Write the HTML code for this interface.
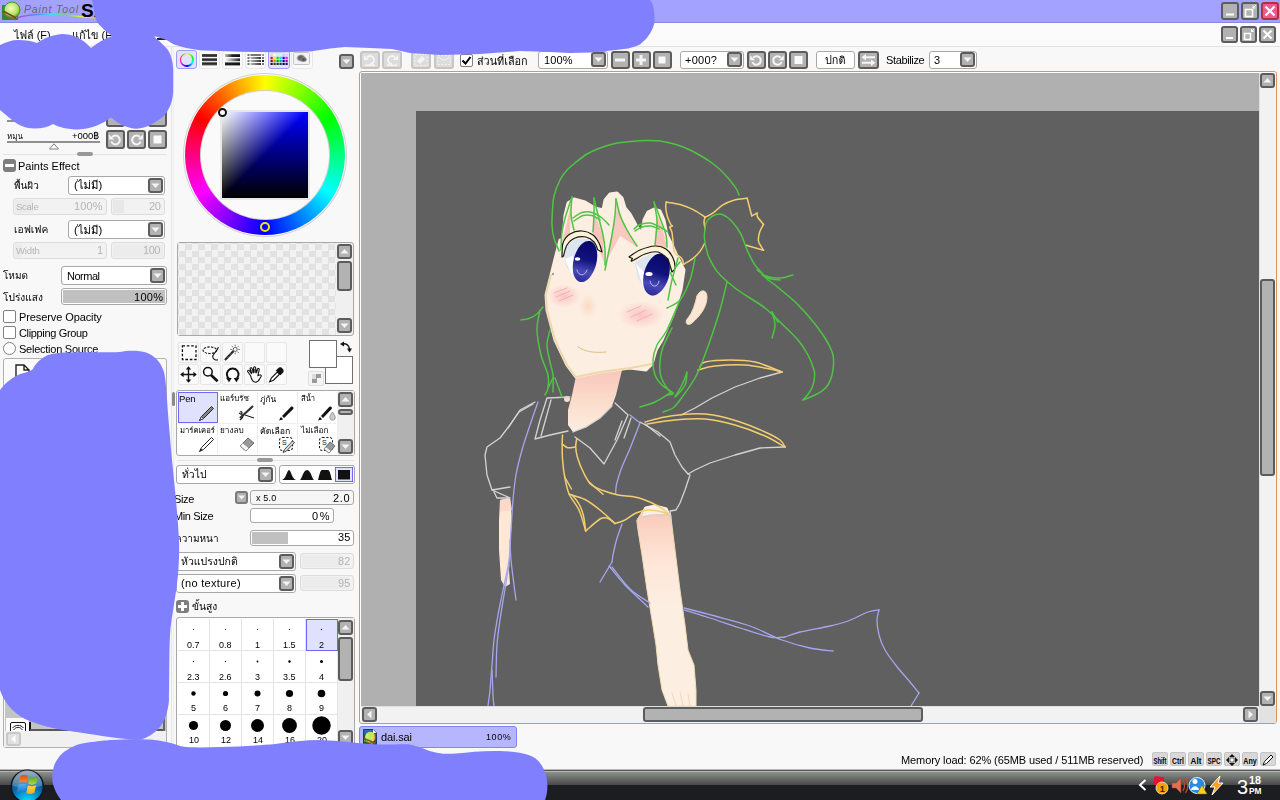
<!DOCTYPE html>
<html lang="th">
<head>
<meta charset="utf-8">
<title>PaintTool SAI</title>
<style>
*{box-sizing:border-box;margin:0;padding:0}
html,body{width:1280px;height:800px;overflow:hidden;background:#f8f8f8}
body{font-family:"Liberation Sans","Loma","Noto Sans Thai","DejaVu Sans",sans-serif;font-size:11px;color:#000;position:relative}
#app{position:absolute;left:0;top:0;width:1280px;height:800px;overflow:hidden;background:#f8f8f8}
.a{position:absolute}
.t{position:absolute;white-space:nowrap;line-height:14px;font-size:11.5px}
.th{position:absolute;white-space:nowrap;line-height:16px;font-size:11.5px}
.b{position:absolute;background:#b2b2b2;border:2px solid #5c5c5c;border-radius:3px}
.bd{position:absolute;background:#dcdcdc;border:2px solid #c6c6c6;border-radius:3px}
.f{position:absolute;background:#fff;border:1px solid #a8a8a8;border-radius:3px}
.fd{position:absolute;background:#f2f2f2;border:1px solid #dcdcdc;border-radius:3px;color:#b8b8b8}
.ic{position:absolute;border:1px solid #e6e6e6;border-radius:2px;background:#fafafa}
svg{position:absolute;overflow:visible}
.r{text-align:right}
.x{position:absolute;white-space:nowrap;line-height:16px;will-change:transform}
.sk{height:14px;background:#d8d8d8;border:1px solid #c4c4c4;border-radius:2px;font-size:9.5px;line-height:13px;white-space:nowrap;overflow:visible;font-weight:bold;font-family:"Liberation Sans","DejaVu Sans",sans-serif}
.sk span{position:absolute;left:-12px;width:38px;top:1px;text-align:center;display:block}
</style>
</head>
<body>
<div id="app">

<!-- ===== title bar ===== -->
<div class="a" id="titlebar" style="left:0;top:0;width:1280px;height:23px;background:#a3a3ff;border-bottom:1px solid #8888e6"></div>
<!-- ===== menu bar ===== -->
<div class="a" id="menubar" style="left:0;top:23px;width:1280px;height:24px;background:#fbfbfb;border-bottom:1px solid #e2e2e2"></div>

<!-- logo -->
<svg class="a" style="left:0;top:0" width="100" height="23" viewBox="0 0 100 23">
  <defs>
    <linearGradient id="rb" x1="0" x2="1" y1="0" y2="0">
      <stop offset="0" stop-color="#c040e0"/><stop offset=".25" stop-color="#6080ff"/><stop offset=".45" stop-color="#40e0f0"/><stop offset=".65" stop-color="#60e060"/><stop offset=".85" stop-color="#f0f040"/><stop offset="1" stop-color="#ffb040"/>
    </linearGradient>
    <radialGradient id="lime" cx=".45" cy=".4" r=".6"><stop offset="0" stop-color="#f0ffc0"/><stop offset=".7" stop-color="#b8e060"/><stop offset="1" stop-color="#50a020"/></radialGradient>
  </defs>
  <rect x="2" y="5" width="16" height="15" rx="1" fill="#2e8a34"/>
  <circle cx="12" cy="10" r="8" fill="url(#lime)" stroke="#3a9a2a" stroke-width="1"/>
  <path d="M3 11 L18 19" stroke="#7a4a20" stroke-width="1.6"/>
  <path d="M3 14 L16 20" stroke="#a06a30" stroke-width="1.2"/>
  <path d="M16 18 C35 12,55 14,95 18" stroke="url(#rb)" stroke-width="1.6" fill="none"/>
  <text x="24" y="13" font-family="Liberation Sans,sans-serif" font-style="italic" font-size="10.5" fill="#666" letter-spacing=".85">Paint Tool</text>
  <text x="81" y="17" font-family="Liberation Sans,sans-serif" font-weight="bold" font-size="19" fill="#000">SAI</text>
</svg>

<!-- window buttons row 1 -->
<div class="b" style="left:1221px;top:2px;width:18px;height:18px"><svg width="14" height="14" viewBox="0 0 14 14"><rect x="3" y="9.5" width="8" height="2" fill="#fff"/></svg></div>
<div class="b" style="left:1241px;top:2px;width:18px;height:18px"><svg width="14" height="14" viewBox="0 0 14 14"><rect x="2.5" y="5.5" width="7" height="7" fill="none" stroke="#fff" stroke-width="1.6"/><path d="M10 4 L13 1 M10 1.5 V4 H12.5" stroke="#fff" stroke-width="1" fill="none"/></svg></div>
<div class="b" style="left:1261px;top:2px;width:18px;height:18px;background:#ee5a8e;border-color:#b0303c"><svg width="14" height="14" viewBox="0 0 14 14"><path d="M2.5 2.5 L11.5 11.5 M11.5 2.5 L2.5 11.5" stroke="#fff" stroke-width="2.2"/></svg></div>
<!-- window buttons row 2 -->
<div class="b" style="left:1221px;top:26px;width:17px;height:17px"><svg width="13" height="13" viewBox="0 0 13 13"><rect x="3" y="9" width="7" height="2" fill="#fff"/></svg></div>
<div class="b" style="left:1240px;top:26px;width:17px;height:17px"><svg width="13" height="13" viewBox="0 0 13 13"><rect x="2.5" y="5.5" width="6" height="6" fill="none" stroke="#fff" stroke-width="1.5"/><path d="M9.5 3.5 L12 1 M9.5 1.2 V3.5 H11.8" stroke="#fff" stroke-width="1" fill="none"/></svg></div>
<div class="b" style="left:1259px;top:26px;width:17px;height:17px"><svg width="13" height="13" viewBox="0 0 13 13"><path d="M2.5 2.5 L10.5 10.5 M10.5 2.5 L2.5 10.5" stroke="#fff" stroke-width="2"/></svg></div>

<!-- menu text -->


<div class="a" style="left:157px;top:38px;width:9px;height:2px;background:#222"></div>

<!-- ===== left panel ===== -->
<div class="a" style="left:171px;top:47px;width:1px;height:700px;background:#e4e4e4"></div>
<div class="a" style="left:173px;top:47px;width:1px;height:700px;background:#eeeeee"></div>
<!-- hidden-by-blob row of buttons (partially visible) -->
<div class="b" style="left:106px;top:108px;width:19px;height:19px"></div>
<div class="b" style="left:127px;top:108px;width:19px;height:19px"></div>
<div class="b" style="left:148px;top:108px;width:19px;height:19px"></div>
<div class="a" style="left:7px;top:120px;width:93px;height:2px;background:#909090"></div>
<!-- rotate row -->


<div class="a" style="left:7px;top:141px;width:93px;height:2px;background:#909090"></div>
<svg style="left:48px;top:143px" width="12" height="7" viewBox="0 0 12 7"><path d="M6 .8 L10.5 6 H1.5 Z" fill="#fff" stroke="#808080" stroke-width="1"/></svg>
<div class="b" style="left:106px;top:130px;width:19px;height:19px"><svg width="15" height="15" viewBox="0 0 15 15"><path d="M4.200 5 A4.400 4.400 0 1 1 3.300 9.500" fill="none" stroke="#f6f6f6" stroke-width="2"/><path d="M1.200 2.500 V7.500 H6.200 Z" fill="#f6f6f6"/></svg></div>
<div class="b" style="left:127px;top:130px;width:19px;height:19px"><svg width="15" height="15" viewBox="0 0 15 15"><path d="M10.800 5 A4.400 4.400 0 1 0 11.700 9.500" fill="none" stroke="#f6f6f6" stroke-width="2"/><path d="M13.800 2.500 V7.500 H8.800 Z" fill="#f6f6f6"/></svg></div>
<div class="b" style="left:148px;top:130px;width:19px;height:19px"><svg width="15" height="15" viewBox="0 0 15 15"><rect x="3.500" y="3.500" width="8" height="8" fill="#fafafa"/></svg></div>
<!-- separator -->
<div class="a" style="left:3px;top:154px;width:164px;height:1px;background:#e4e4e4"></div>
<div class="a" style="left:77px;top:152px;width:16px;height:4px;border-radius:2px;background:#989898"></div>
<!-- Paints Effect -->
<div class="a" style="left:3px;top:159px;width:13px;height:13px;border-radius:3px;background:#7e7e7e"><div class="a" style="left:2px;top:5px;width:9px;height:3px;background:#fff"></div></div>


<div class="f" style="left:68px;top:176px;width:97px;height:19px"></div>
<div class="b" style="left:148px;top:178px;width:15px;height:15px"><svg width="11" height="11" viewBox="0 0 11 11"><path d="M1.5 3.5 H9.5 L5.5 8 Z" fill="#f4f4f4"/></svg></div>
<div class="fd" style="left:13px;top:198px;width:94px;height:17px"><div class="a" style="left:1px;top:1px;width:18px;height:13px;background:#ebebeb"></div></div>
<div class="fd" style="left:111px;top:198px;width:54px;height:17px"><div class="a" style="left:1px;top:1px;width:11px;height:13px;background:#e8e8e8"></div></div>

<div class="f" style="left:68px;top:220px;width:97px;height:19px"></div>
<div class="b" style="left:148px;top:222px;width:15px;height:15px"><svg width="11" height="11" viewBox="0 0 11 11"><path d="M1.5 3.5 H9.5 L5.5 8 Z" fill="#f4f4f4"/></svg></div>
<div class="fd" style="left:13px;top:242px;width:94px;height:17px"><div class="a" style="left:1px;top:1px;width:7px;height:13px;background:#ebebeb"></div></div>
<div class="fd" style="left:111px;top:242px;width:54px;height:17px"><div class="a" style="left:1px;top:1px;width:50px;height:13px;background:#ececec"></div></div>
<!-- mode -->

<div class="f" style="left:61px;top:266px;width:106px;height:19px"></div>
<div class="b" style="left:150px;top:268px;width:15px;height:15px"><svg width="11" height="11" viewBox="0 0 11 11"><path d="M1.5 3.5 H9.5 L5.5 8 Z" fill="#f4f4f4"/></svg></div>

<div class="f" style="left:61px;top:288px;width:106px;height:17px;background:#fff"><div class="a" style="left:1px;top:1px;width:102px;height:13px;background:#c0c0c0"></div></div>
<!-- checkboxes -->
<div class="a" style="left:3px;top:310px;width:13px;height:13px;border:1px solid #808080;border-radius:2px;background:#fff"></div>

<div class="a" style="left:3px;top:326px;width:13px;height:13px;border:1px solid #808080;border-radius:2px;background:#fff"></div>

<div class="a" style="left:3px;top:342px;width:13px;height:13px;border:1px solid #808080;border-radius:7px;background:#fff"></div>

<!-- layer frame -->
<div class="a" style="left:3px;top:358px;width:164px;height:390px;border:1px solid #b0b0b0;border-radius:3px;background:#fafafa"></div>
<svg style="left:15px;top:364px" width="16" height="18" viewBox="0 0 16 18"><path d="M1 1 H9 L14 6 V17 H1 Z M9 1 V6 H14" fill="#fff" stroke="#222" stroke-width="1.4"/></svg>
<!-- bottom of layer panel -->
<div class="a" style="left:5px;top:700px;width:161px;height:31px;background:#c4c4c4"></div>
<div class="a" style="left:6px;top:718px;width:23px;height:13px;background:#fbfbfb"></div>
<div class="a" style="left:10px;top:722px;width:16px;height:12px;border:1.500px solid #111;border-radius:2px;background:#fdfdfd"></div>
<svg style="left:12px;top:724px" width="12" height="7" viewBox="0 0 12 7"><path d="M.500 4 C3 .500,9 .500,11.500 4 M1.500 6 C4 2.500,8 2.500,10.500 6" fill="none" stroke="#222" stroke-width="1"/></svg>
<div class="a" style="left:29px;top:722px;width:1.500px;height:9px;background:#111"></div>
<div class="a" style="left:30px;top:729px;width:135px;height:1.500px;background:#585858"></div>
<div class="a" style="left:163px;top:711px;width:1.500px;height:20px;background:#686868"></div>
<div class="a" style="left:4px;top:731px;width:162px;height:16px;background:#f0f0f0"></div>
<div class="bd" style="left:6px;top:732px;width:15px;height:14px;background:#e0e0e0;border-color:#c8c8c8"><svg width="11" height="10" viewBox="0 0 11 10"><path d="M7.500 1 V9 L3 5 Z" fill="#fff"/></svg></div>
<!-- ===== color panel ===== -->
<!-- tabs -->
<svg style="left:176px;top:50px" width="140" height="20" viewBox="0 0 140 20">
 <defs>
  <linearGradient id="bv" x1="0" y1="0" x2="0" y2="1"><stop offset="0" stop-color="#111"/><stop offset="1" stop-color="#555"/></linearGradient>
  <linearGradient id="bh1" x1="0" y1="0" x2="1" y2="0"><stop offset="0" stop-color="#bbb"/><stop offset=".5" stop-color="#222"/><stop offset="1" stop-color="#111"/></linearGradient>
  <linearGradient id="bh2" x1="0" y1="0" x2="1" y2="0"><stop offset="0" stop-color="#fff"/><stop offset="1" stop-color="#222"/></linearGradient>
  <linearGradient id="bh3" x1="0" y1="0" x2="1" y2="0"><stop offset="0" stop-color="#222"/><stop offset="1" stop-color="#111"/></linearGradient>
  <linearGradient id="bh4" x1="0" y1="0" x2="1" y2="0"><stop offset="0" stop-color="#bbb"/><stop offset="1" stop-color="#333"/></linearGradient>
  <radialGradient id="smudge"><stop offset="0" stop-color="#444"/><stop offset=".6" stop-color="#777"/><stop offset="1" stop-color="#999" stop-opacity="0"/></radialGradient>
 </defs>
 <rect x=".5" y=".5" width="20" height="18" rx="2.500" fill="#e2e2ff" stroke="#9c9cff"/>
 <rect x="23.500" y=".5" width="20" height="18" rx="2.500" fill="#fafafa" stroke="#e8e8e8"/>
 <rect x="26" y="4.200" width="15" height="2.800" fill="url(#bv)"/><rect x="26" y="8.400" width="15" height="2.800" fill="url(#bv)"/><rect x="26" y="12.400" width="15" height="3" fill="url(#bv)"/>
 <rect x="46.500" y=".5" width="20" height="18" rx="2.500" fill="#fafafa" stroke="#e8e8e8"/>
 <rect x="49" y="4.200" width="15" height="2.800" fill="url(#bh1)"/><rect x="49" y="8.400" width="15" height="2.800" fill="url(#bh2)"/><rect x="49" y="12.400" width="15" height="3" fill="url(#bh3)"/>
 <rect x="69.500" y=".5" width="20" height="18" rx="2.500" fill="#fafafa" stroke="#e8e8e8"/>
 <g fill="#777"><rect x="71.500" y="4" width="2" height="2"/><rect x="71.500" y="7" width="2" height="2"/><rect x="71.500" y="10" width="2" height="2"/><rect x="71.500" y="13" width="2" height="2"/><rect x="86" y="4" width="2" height="2" fill="#999"/><rect x="86" y="7" width="2" height="2" fill="#777"/><rect x="86" y="10" width="2" height="2" fill="#222"/><rect x="86" y="13" width="2" height="2" fill="#777"/></g>
 <rect x="74.500" y="4" width="10.500" height="2" fill="#777"/><rect x="74.500" y="7" width="10.500" height="2" fill="url(#bh4)"/><rect x="74.500" y="10" width="10.500" height="2" fill="url(#bh4)"/><rect x="74.500" y="13" width="10.500" height="2" fill="url(#bh4)"/>
 <rect x="92.500" y=".5" width="21" height="18" rx="2.500" fill="#e2e2ff" stroke="#9c9cff"/>
 <rect x="94.5" y="3.8" width="2.200" height="2.200" fill="#ffc8c8"/><rect x="97.5" y="3.8" width="2.200" height="2.200" fill="#ffffc0"/><rect x="100.5" y="3.8" width="2.200" height="2.200" fill="#c8ffc8"/><rect x="103.5" y="3.8" width="2.200" height="2.200" fill="#c0ffff"/><rect x="106.5" y="3.8" width="2.200" height="2.200" fill="#c8c8ff"/><rect x="109.5" y="3.8" width="2.200" height="2.200" fill="#ffc0ff"/><rect x="94.5" y="6.8" width="2.200" height="2.200" fill="#ff0000"/><rect x="97.5" y="6.8" width="2.200" height="2.200" fill="#ffee00"/><rect x="100.5" y="6.8" width="2.200" height="2.200" fill="#00e000"/><rect x="103.5" y="6.8" width="2.200" height="2.200" fill="#00e0e0"/><rect x="106.5" y="6.8" width="2.200" height="2.200" fill="#0000ff"/><rect x="109.5" y="6.8" width="2.200" height="2.200" fill="#ff00ff"/><rect x="94.5" y="9.8" width="2.200" height="2.200" fill="#a00000"/><rect x="97.5" y="9.8" width="2.200" height="2.200" fill="#a0a000"/><rect x="100.5" y="9.8" width="2.200" height="2.200" fill="#00a000"/><rect x="103.5" y="9.8" width="2.200" height="2.200" fill="#00a0a0"/><rect x="106.5" y="9.8" width="2.200" height="2.200" fill="#0000a0"/><rect x="109.5" y="9.8" width="2.200" height="2.200" fill="#a000a0"/><rect x="94.5" y="12.8" width="2.200" height="2.200" fill="#400000"/><rect x="97.5" y="12.8" width="2.200" height="2.200" fill="#404000"/><rect x="100.5" y="12.8" width="2.200" height="2.200" fill="#004000"/><rect x="103.5" y="12.8" width="2.200" height="2.200" fill="#004040"/><rect x="106.5" y="12.8" width="2.200" height="2.200" fill="#000040"/><rect x="109.5" y="12.8" width="2.200" height="2.200" fill="#400040"/>
 <rect x="115.500" y=".5" width="21" height="18" rx="2.500" fill="#fafafa" stroke="#e8e8e8"/>
 <rect x="117.500" y="2.500" width="16" height="12" rx="1" fill="#f2f2f2" stroke="#c4c4c4"/>
 <ellipse cx="125" cy="8" rx="5" ry="4" fill="url(#smudge)"/><ellipse cx="127.500" cy="9.500" rx="4" ry="3" fill="url(#smudge)"/>
</svg>
<div class="a" style="left:179.500px;top:52.500px;width:14px;height:14px;border-radius:7px;background:conic-gradient(#ff0,#0f0,#0ff,#00f,#f0f,#f00,#ff0)"></div><div class="a" style="left:181.300px;top:54.300px;width:10.400px;height:10.400px;border-radius:6px;background:#e2e2ff"></div>
<div class="b" style="left:339px;top:54px;width:15px;height:15px"><svg width="11" height="11" viewBox="0 0 11 11"><path d="M1.5 3.5 H9.5 L5.5 8 Z" fill="#f4f4f4"/></svg></div>

<!-- wheel -->
<div class="a" style="left:183px;top:73px;width:164px;height:164px;border-radius:82px;background:#d2d2d2"></div>
<div class="a" style="left:184px;top:74px;width:162px;height:162px;border-radius:81px;background:#fafafa"></div>
<div class="a" style="left:185px;top:75px;width:160px;height:160px;border-radius:80px;background:conic-gradient(from 0deg,#ffff00 0deg,#00ff00 60deg,#00ffff 120deg,#0000ff 180deg,#ff00ff 240deg,#ff0000 300deg,#ffff00 360deg)"></div>
<div class="a" style="left:200px;top:90px;width:130px;height:130px;border-radius:65px;background:#d2d2d2"></div>
<div class="a" style="left:201px;top:91px;width:128px;height:128px;border-radius:64px;background:#fafafa"></div>
<!-- SV square -->
<div class="a" style="left:220px;top:110px;width:90px;height:90px;background:#e8e8e8"></div>
<div class="a" style="left:222px;top:112px;width:86px;height:86px;background:linear-gradient(135deg,#ffff00 0%,#000000 50%),linear-gradient(to bottom,#0000ff,#000000);background-blend-mode:screen"></div>
<div class="a" style="left:218px;top:108px;width:9px;height:9px;border-radius:5px;border:2px solid #111;background:#fff"></div>
<div class="a" style="left:260px;top:222px;width:10px;height:10px;border-radius:5px;border:2px solid #f0e800;background:transparent"></div>

<!-- swatches -->
<div class="a" style="left:177px;top:242px;width:177px;height:94px;border:1px solid #a8a8a8;border-radius:3px;background:#f0f0f0"></div>
<div class="a" style="left:178px;top:243px;width:158px;height:92px;background:conic-gradient(#e2e2e2 25%,#f2f2f2 0 50%,#e2e2e2 0 75%,#f2f2f2 0) 1px 1px/13px 13px"></div>
<div class="b" style="left:337px;top:244px;width:15px;height:15px"><svg width="11" height="11" viewBox="0 0 11 11"><path d="M1.5 7.5 H9.5 L5.5 3 Z" fill="#f4f4f4"/></svg></div>
<div class="b" style="left:337px;top:261px;width:15px;height:30px"></div>
<div class="b" style="left:337px;top:318px;width:15px;height:15px"><svg width="11" height="11" viewBox="0 0 11 11"><path d="M1.5 3.5 H9.5 L5.5 8 Z" fill="#f4f4f4"/></svg></div>

<!-- tool icons -->
<div class="ic" style="left:178px;top:342px;width:21px;height:21px"><svg width="19" height="19" viewBox="0 0 19 19"><rect x="3.400" y="2.900" width="13.600" height="13.600" fill="none" stroke="#111" stroke-width="1.300" stroke-dasharray="2.600 1.800"/></svg></div>
<div class="ic" style="left:200px;top:342px;width:21px;height:21px"><svg width="19" height="19" viewBox="0 0 19 19"><ellipse cx="8.800" cy="7.200" rx="6.700" ry="3.300" fill="none" stroke="#111" stroke-width="1.100" stroke-dasharray="2.300 1.300"/><path d="M17.400 4.200 C16.500 8.500,11.500 10.500,11.700 13.800 C11.900 16.300,14.500 17.200,17 16.900" fill="none" stroke="#111" stroke-width="1.100"/></svg></div>
<div class="ic" style="left:222px;top:342px;width:21px;height:21px"><svg width="19" height="19" viewBox="0 0 19 19"><path d="M2 17 L10.500 8" stroke="#111" stroke-width="2"/><path d="M2.600 16.400 L10 8.600" stroke="#eee" stroke-width=".6" stroke-dasharray="1 1"/><circle cx="12.200" cy="6.400" r="2" fill="#fff" stroke="#333" stroke-width=".8"/><path d="M12.200 1.500 V3.300 M12.200 9.500 V11.300 M7.300 6.400 H9.100 M15.300 6.400 H17.100 M8.700 2.900 L10 4.200 M14.400 8.600 L15.700 9.900 M15.700 2.900 L14.400 4.200" stroke="#555" stroke-width=".8"/></svg></div>
<div class="ic" style="left:244px;top:342px;width:21px;height:21px"></div>
<div class="ic" style="left:266px;top:342px;width:21px;height:21px"></div>
<div class="ic" style="left:178px;top:364px;width:21px;height:21px"><svg width="19" height="19" viewBox="0 0 19 19"><path d="M9.500 2.500 V16.500 M2.500 9.500 H16.500" stroke="#111" stroke-width="1.400"/><path d="M9.500 1.200 L12.200 4.600 H6.800 Z M9.500 17.800 L12.200 14.400 H6.800 Z M1.200 9.500 L4.600 6.800 V12.200 Z M17.800 9.500 L14.400 6.800 V12.200 Z" fill="#111"/></svg></div>
<div class="ic" style="left:200px;top:364px;width:21px;height:21px"><svg width="19" height="19" viewBox="0 0 19 19"><circle cx="6.900" cy="6.800" r="4.300" fill="#fff" stroke="#111" stroke-width="1.500"/><path d="M10 10 L16.600 16.200" stroke="#111" stroke-width="2.600"/></svg></div>
<div class="ic" style="left:222px;top:364px;width:21px;height:21px"><svg width="19" height="19" viewBox="0 0 19 19"><path d="M7 14.500 A5.800 5.800 0 1 1 12.400 14.500" fill="none" stroke="#111" stroke-width="1.900"/><path d="M3 12.800 L8.700 13 L6 17.300 Z M16.400 12.800 L10.700 13 L13.400 17.300 Z" fill="#111"/></svg></div>
<div class="ic" style="left:244px;top:364px;width:21px;height:21px"><svg width="19" height="19" viewBox="0 0 19 19"><path d="M5.500 10.500 L2.800 6.800 C2 5.600 3.700 4.700 4.500 5.800 L6.800 8.800 L5.200 4 C4.800 2.600 6.700 2.200 7.100 3.500 L8.700 8 L8.600 2.800 C8.600 1.400 10.500 1.400 10.600 2.800 L10.900 8.200 L12.300 4.200 C12.800 2.900 14.600 3.600 14.200 4.900 L12.900 10.500 C15 9.300 17 10.300 16 11.600 C14.300 13.500 14 17.300 10.500 17.300 C7 17.300 6.200 13.500 5.500 10.500 Z" fill="#fff" stroke="#111" stroke-width="1.100"/><path d="M7.500 8 L6.800 5 M9.700 7.500 L9.600 4 M11.600 8 L12.600 5.200" stroke="#111" stroke-width=".7"/></svg></div>
<div class="ic" style="left:266px;top:364px;width:21px;height:21px"><svg width="19" height="19" viewBox="0 0 19 19"><path d="M2.700 16.800 L4.300 13 L10.300 7 L12.500 9.200 L6.500 15.200 Z" fill="#fff" stroke="#111" stroke-width="1.100"/><path d="M9.600 5.600 L11.800 3.400 C13.500 1.600 17.300 5 15.500 7.300 L13.400 9.500 Z" fill="#111" stroke="#111" stroke-width="1.200"/></svg></div>
<!-- fg/bg colours -->
<div class="a" style="left:325px;top:356px;width:28px;height:28px;background:#fff;border:1px solid #707070"></div>
<div class="a" style="left:309px;top:340px;width:28px;height:28px;background:#fff;border:1px solid #707070"></div>
<svg style="left:339px;top:341px" width="13" height="12" viewBox="0 0 13 12"><path d="M3 3 C7 2,10 4,10.5 8" fill="none" stroke="#111" stroke-width="1.3"/><path d="M1 3 L5 .5 V5.5 Z M10.5 11.5 L8 7.5 H13 Z" fill="#111"/></svg>
<div class="ic" style="left:308px;top:371px;width:16px;height:15px;background:#f4f4f4;border-color:#e0e0e0"><div class="a" style="left:3px;top:2px;width:9px;height:9px;background:conic-gradient(#9a9a9a 0 25%,#f4f4f4 0 50%,#9a9a9a 0 75%,#dcdcdc 0)"></div></div>

<!-- ===== tool box ===== -->
<div class="a" style="left:172px;top:392px;width:3px;height:14px;border-radius:2px;background:#8a8a8a"></div>
<div class="a" style="left:176px;top:390px;width:179px;height:66px;border:1px solid #a8a8a8;border-radius:3px;background:#fff"></div>
<div class="a" style="left:217px;top:392px;width:1px;height:62px;background:#ececec"></div>
<div class="a" style="left:257px;top:392px;width:1px;height:62px;background:#ececec"></div>
<div class="a" style="left:297px;top:392px;width:1px;height:62px;background:#ececec"></div>
<div class="a" style="left:178px;top:423px;width:158px;height:1px;background:#f0f0f0"></div>
<div class="a" style="left:178px;top:392px;width:40px;height:31px;background:#e0e0ff;border:1px solid #6a6aff"></div>








<!-- tool glyphs -->
<svg style="left:198px;top:404px" width="18" height="18" viewBox="0 0 18 18"><path d="M1.5 16.5 L3.5 12.5 L13.5 2.5 L15.5 4.5 L5.5 14.5 Z" fill="#888" stroke="#222" stroke-width="1"/><path d="M1.5 16.5 L3.5 12.5 L5.5 14.5 Z" fill="#fff" stroke="#222" stroke-width=".8"/></svg>
<svg style="left:237px;top:404px" width="20" height="18" viewBox="0 0 20 18"><path d="M3 14 L16 2" stroke="#333" stroke-width="2.2"/><path d="M2 9 L7 12 M8 11 L17 14 M6 13 L3 16 M3 8 C5 7,6 9,4 10" stroke="#222" stroke-width="1.2" fill="none"/></svg>
<svg style="left:278px;top:403px" width="18" height="19" viewBox="0 0 18 19"><path d="M1 17.600 L2.600 14.400 L13 3.800 C14.200 2.600,16.400 4.700,15.200 5.900 L4.600 16.400 Z" fill="#111"/><path d="M3.300 13.400 L6 16" stroke="#fff" stroke-width="1.500"/><path d="M2.300 15.200 L3.800 16.600" stroke="#111" stroke-width="1.200"/></svg>
<svg style="left:317px;top:403px" width="20" height="19" viewBox="0 0 20 19"><path d="M1 17.600 L2.600 14.400 L12.400 3.800 C13.600 2.600,15.800 4.700,14.600 5.900 L4.600 16.400 Z" fill="#111"/><path d="M3.300 13.400 L6 16" stroke="#fff" stroke-width="1.500"/><path d="M2.300 15.200 L3.800 16.600" stroke="#111" stroke-width="1.200"/><path d="M15.5 9 C17.5 12,19 14,17.8 16 C16.8 17.6,14 17.6,13.2 16 C12 14,13.5 12,15.5 9 Z" fill="#ccc" stroke="#888" stroke-width=".8"/></svg>
<svg style="left:198px;top:435px" width="18" height="18" viewBox="0 0 18 18"><path d="M1.5 16.5 L3.5 12.5 L13.5 2.5 L15.5 4.5 L5.5 14.5 Z" fill="#fff" stroke="#222" stroke-width="1"/><path d="M1.5 16.5 L3 13.5 L4.5 15 Z" fill="#222"/></svg>
<svg style="left:238px;top:435px" width="18" height="18" viewBox="0 0 18 18"><path d="M2 11 L10 3 L16 8 L8 16 Z" fill="#999" stroke="#555" stroke-width=".8"/><path d="M2 11 L5 8 L11 13 L8 16 Z" fill="#f4f4f4" stroke="#888" stroke-width=".8"/></svg>
<svg style="left:278px;top:436px" width="18" height="18" viewBox="0 0 18 18"><rect x="1.5" y="1.5" width="13" height="13" rx="3" fill="none" stroke="#222" stroke-width="1.1" stroke-dasharray="2.2 1.6"/><text x="4" y="9" font-size="7" font-family="Liberation Sans,sans-serif" fill="#111">S</text><path d="M5 16.5 L6.5 13.5 L14.5 5 L16.5 6.5 L8.5 15 Z" fill="#ddd" stroke="#333" stroke-width=".9"/></svg>
<svg style="left:318px;top:436px" width="19" height="18" viewBox="0 0 19 18"><rect x="1.5" y="1.5" width="13" height="13" rx="3" fill="none" stroke="#222" stroke-width="1.1" stroke-dasharray="2.2 1.6"/><text x="4" y="9" font-size="7" font-family="Liberation Sans,sans-serif" fill="#111">S</text><path d="M6 13 L12 6 L17 10 L11 17 Z" fill="#999" stroke="#555" stroke-width=".8"/><path d="M6 13 L8 10.7 L13 14.7 L11 17 Z" fill="#f4f4f4" stroke="#888" stroke-width=".8"/></svg>
<!-- tool scrollbar -->
<div class="a" style="left:337px;top:391px;width:17px;height:64px;background:#f0f0f0"></div>
<div class="b" style="left:338px;top:392px;width:15px;height:15px"><svg width="11" height="11" viewBox="0 0 11 11"><path d="M1.5 7.5 H9.5 L5.5 3 Z" fill="#f4f4f4"/></svg></div>
<div class="b" style="left:338px;top:409px;width:15px;height:6px"></div>
<div class="b" style="left:338px;top:439px;width:15px;height:15px"><svg width="11" height="11" viewBox="0 0 11 11"><path d="M1.5 3.5 H9.5 L5.5 8 Z" fill="#f4f4f4"/></svg></div>
<!-- separator -->
<div class="a" style="left:177px;top:460px;width:177px;height:1px;background:#e4e4e4"></div>
<div class="a" style="left:257px;top:458px;width:16px;height:4px;border-radius:2px;background:#989898"></div>
<!-- brush group dropdown -->
<div class="f" style="left:176px;top:465px;width:100px;height:19px"></div>
<div class="b" style="left:258px;top:467px;width:15px;height:15px"><svg width="11" height="11" viewBox="0 0 11 11"><path d="M1.5 3.5 H9.5 L5.5 8 Z" fill="#f4f4f4"/></svg></div>
<div class="f" style="left:279px;top:465px;width:76px;height:19px"></div>
<svg style="left:281px;top:467px" width="72" height="15" viewBox="0 0 72 15"><path d="M1 13 C5 12,6 3,8 3 C10 3,11 12,15 13 Z" fill="#111"/><path d="M19 13 C21 12,22 3,26 3 C30 3,31 12,33 13 Z" fill="#111"/><path d="M37 13 C38 10,39 3,41 3 H47 C49 3,50 10,51 13 Z" fill="#111"/><rect x="54.500" y=".5" width="17" height="14" fill="#e0e0ff" stroke="#6a6aff"/><rect x="57" y="3" width="12" height="9.500" fill="#111"/></svg>
<!-- size -->

<div class="b" style="left:235px;top:491px;width:13px;height:13px;border-color:#7a7a7a"><svg width="9" height="9" viewBox="0 0 9 9"><path d="M1 2.500 H8 L4.500 6.500 Z" fill="#f4f4f4"/></svg></div>
<div class="f" style="left:250px;top:490px;width:104px;height:15px;background:#f6f6f6"></div>

<div class="f" style="left:250px;top:508px;width:84px;height:15px"></div>

<div class="f" style="left:250px;top:530px;width:104px;height:16px"><div class="a" style="left:1px;top:1px;width:36px;height:12px;background:#c0c0c0"></div></div>
<div class="f" style="left:176px;top:552px;width:120px;height:19px"></div>
<div class="b" style="left:279px;top:554px;width:15px;height:15px"><svg width="11" height="11" viewBox="0 0 11 11"><path d="M1.5 3.5 H9.5 L5.5 8 Z" fill="#f4f4f4"/></svg></div>
<div class="fd" style="left:300px;top:553px;width:54px;height:16px"><div class="a" style="left:1px;top:1px;width:41px;height:12px;background:#ececec"></div></div>
<div class="f" style="left:176px;top:574px;width:120px;height:19px"></div>
<div class="b" style="left:279px;top:576px;width:15px;height:15px"><svg width="11" height="11" viewBox="0 0 11 11"><path d="M1.5 3.5 H9.5 L5.5 8 Z" fill="#f4f4f4"/></svg></div>
<div class="fd" style="left:300px;top:575px;width:54px;height:16px"><div class="a" style="left:1px;top:1px;width:47px;height:12px;background:#ececec"></div></div>
<!-- advanced -->
<div class="a" style="left:176px;top:600px;width:13px;height:13px;border-radius:3px;background:#7e7e7e"><div class="a" style="left:2px;top:5px;width:9px;height:3px;background:#fff"></div><div class="a" style="left:5px;top:2px;width:3px;height:9px;background:#fff"></div></div>

<!-- ===== brush size grid ===== -->
<div class="a" style="left:176px;top:617px;width:179px;height:132px;border:1px solid #a8a8a8;border-radius:3px;background:#fff"></div>
<div class="a" style="left:337px;top:618px;width:17px;height:130px;background:#f0f0f0"></div>
<div class="a" style="left:209px;top:619px;width:1px;height:129px;background:#e4e4e4"></div>
<div class="a" style="left:241px;top:619px;width:1px;height:129px;background:#e4e4e4"></div>
<div class="a" style="left:273px;top:619px;width:1px;height:129px;background:#e4e4e4"></div>
<div class="a" style="left:305px;top:619px;width:1px;height:129px;background:#e4e4e4"></div>
<div class="a" style="left:337px;top:619px;width:1px;height:129px;background:#e4e4e4"></div>
<div class="a" style="left:178px;top:650px;width:159px;height:1px;background:#e4e4e4"></div>
<div class="a" style="left:178px;top:682px;width:159px;height:1px;background:#e4e4e4"></div>
<div class="a" style="left:178px;top:714px;width:159px;height:1px;background:#e4e4e4"></div>
<div class="a" style="left:306px;top:619px;width:32px;height:32px;background:#e0e0ff;border:1px solid #6a6aff"></div>
<svg style="left:0;top:0" width="360" height="760" viewBox="0 0 360 760">
<circle cx="193.5" cy="629.5" r="0.5" fill="#000"/>
<circle cx="225.5" cy="629.5" r="0.5" fill="#000"/>
<circle cx="257.5" cy="629.5" r="0.55" fill="#000"/>
<circle cx="289.5" cy="629.5" r="0.6" fill="#000"/>
<circle cx="321.5" cy="629.5" r="0.65" fill="#000"/>
<circle cx="193.5" cy="661.5" r="0.65" fill="#000"/>
<circle cx="225.5" cy="661.5" r="0.7" fill="#000"/>
<circle cx="257.5" cy="661.5" r="0.9" fill="#000"/>
<circle cx="289.5" cy="661.5" r="1.2" fill="#000"/>
<circle cx="321.5" cy="661.5" r="1.5" fill="#000"/>
<circle cx="193.5" cy="693.5" r="2.2" fill="#000"/>
<circle cx="225.5" cy="693.5" r="2.6" fill="#000"/>
<circle cx="257.5" cy="693.5" r="3" fill="#000"/>
<circle cx="289.5" cy="693.5" r="3.6" fill="#000"/>
<circle cx="321.5" cy="693.5" r="3.8" fill="#000"/>
<circle cx="193.5" cy="725.5" r="4.6" fill="#000"/>
<circle cx="225.5" cy="725.5" r="5.5" fill="#000"/>
<circle cx="257.5" cy="725.5" r="6.5" fill="#000"/>
<circle cx="289.5" cy="725.5" r="7.4" fill="#000"/>
<circle cx="321.5" cy="725.5" r="9.2" fill="#000"/>
</svg>




















<div class="b" style="left:338px;top:620px;width:15px;height:15px"><svg width="11" height="11" viewBox="0 0 11 11"><path d="M1.5 7.5 H9.5 L5.5 3 Z" fill="#f4f4f4"/></svg></div>
<div class="b" style="left:338px;top:637px;width:15px;height:44px"></div>
<div class="b" style="left:338px;top:730px;width:15px;height:15px"><svg width="11" height="11" viewBox="0 0 11 11"><path d="M1.5 3.5 H9.5 L5.5 8 Z" fill="#f4f4f4"/></svg></div>

<!-- ===== top toolbar ===== -->
<div class="bd" style="left:360px;top:51px;width:20px;height:18px"><svg width="16" height="14" viewBox="0 0 16 14"><path d="M5 4.500 A4 4 0 1 1 8 11" fill="none" stroke="#f6f6f6" stroke-width="1.8"/><path d="M2 2 V7 H7 Z" fill="#f6f6f6"/><rect x="3" y="11.500" width="10" height="1.500" fill="#f6f6f6"/></svg></div>
<div class="bd" style="left:382px;top:51px;width:20px;height:18px"><svg width="16" height="14" viewBox="0 0 16 14"><path d="M11 4.500 A4 4 0 1 0 8 11" fill="none" stroke="#f6f6f6" stroke-width="1.8"/><path d="M14 2 V7 H9 Z" fill="#f6f6f6"/><rect x="3" y="11.500" width="10" height="1.500" fill="#f6f6f6"/></svg></div>
<div class="bd" style="left:411px;top:51px;width:20px;height:18px"><svg width="16" height="14" viewBox="0 0 16 14"><rect x="2" y="1.500" width="12" height="11" fill="none" stroke="#f2f2f2" stroke-width="1" stroke-dasharray="2 1.500"/><path d="M4 8 L9 3 L12 6 L7 11 Z" fill="#f4f4f4"/></svg></div>
<div class="bd" style="left:434px;top:51px;width:20px;height:18px"><svg width="16" height="14" viewBox="0 0 16 14"><rect x="2" y="2.500" width="12" height="9" fill="none" stroke="#f2f2f2" stroke-width="1" stroke-dasharray="2 1.500"/><path d="M3 4 L6 7 H10 L13 4" fill="none" stroke="#f4f4f4" stroke-width="1"/></svg></div>
<div class="a" style="left:460px;top:54px;width:13px;height:13px;border:1px solid #808080;border-radius:2px;background:#fff"><svg style="left:0;top:0" width="11" height="11" viewBox="0 0 11 11"><path d="M1.500 5.500 L4.500 8.500 L9.500 2" fill="none" stroke="#000" stroke-width="2"/></svg></div>

<div class="f" style="left:538px;top:51px;width:70px;height:18px"></div>
<div class="b" style="left:591px;top:52px;width:15px;height:15px"><svg width="11" height="11" viewBox="0 0 11 11"><path d="M1.5 3.5 H9.5 L5.5 8 Z" fill="#f4f4f4"/></svg></div>
<div class="b" style="left:611px;top:50.500px;width:19px;height:18px"><svg width="14" height="14" viewBox="0 0 14 14"><rect x="2" y="5.500" width="10" height="3" fill="#f4f4f4"/></svg></div>
<div class="b" style="left:632px;top:50.500px;width:19px;height:18px"><svg width="14" height="14" viewBox="0 0 14 14"><rect x="2" y="5.500" width="10" height="3" fill="#f4f4f4"/><rect x="5.500" y="2" width="3" height="10" fill="#f4f4f4"/></svg></div>
<div class="b" style="left:653px;top:50.500px;width:19px;height:18px"><svg width="14" height="14" viewBox="0 0 14 14"><rect x="3.500" y="3.500" width="7" height="7" fill="#f8f8f8"/></svg></div>
<div class="f" style="left:680px;top:51px;width:64px;height:18px"></div>
<div class="b" style="left:727px;top:52px;width:15px;height:15px"><svg width="11" height="11" viewBox="0 0 11 11"><path d="M1.5 3.5 H9.5 L5.5 8 Z" fill="#f4f4f4"/></svg></div>
<div class="b" style="left:747px;top:50.5px;width:19px;height:18px"><svg width="15" height="14" viewBox="0 0 15 14"><path d="M4.200 4.600 A4.300 4.300 0 1 1 3.400 9" fill="none" stroke="#f6f6f6" stroke-width="2"/><path d="M1.200 2.200 V7.200 H6.200 Z" fill="#f6f6f6"/></svg></div>
<div class="b" style="left:768px;top:50.5px;width:19px;height:18px"><svg width="15" height="14" viewBox="0 0 15 14"><path d="M10.800 4.600 A4.300 4.300 0 1 0 11.600 9" fill="none" stroke="#f6f6f6" stroke-width="2"/><path d="M13.800 2.200 V7.200 H8.800 Z" fill="#f6f6f6"/></svg></div>
<div class="b" style="left:789px;top:50.5px;width:19px;height:18px"><svg width="15" height="14" viewBox="0 0 15 14"><rect x="3.500" y="3" width="8" height="8" fill="#fafafa"/></svg></div>
<div class="f" style="left:816px;top:50.500px;width:39px;height:18px;text-align:center"></div>
<div class="b" style="left:858px;top:50.500px;width:21px;height:18px"><svg width="17" height="14" viewBox="0 0 17 14"><path d="M5 4.300 H15 M12 9.700 H2" stroke="#f6f6f6" stroke-width="2"/><path d="M1.500 4.300 L6 1 V7.600 Z M15.500 9.700 L11 6.400 V13 Z" fill="#f6f6f6"/></svg></div>

<div class="f" style="left:929px;top:51px;width:48px;height:18px"></div>
<div class="b" style="left:960px;top:52px;width:15px;height:15px"><svg width="11" height="11" viewBox="0 0 11 11"><path d="M1.5 3.5 H9.5 L5.5 8 Z" fill="#f4f4f4"/></svg></div>

<!-- ===== canvas frame ===== -->
<div class="a" style="left:359px;top:71px;width:918px;height:653px;border:1px solid #e0905a;border-radius:3px;background:#fff"></div>
<div class="a" style="left:361px;top:73px;width:898px;height:633px;background:#b0b0b0"></div>
<div class="a" style="left:416px;top:111px;width:843px;height:595px;background:#606060"></div>
<!-- v scrollbar -->
<div class="a" style="left:1259px;top:73px;width:17px;height:633px;background:#f2f2f2;border-left:1px solid #e0e0e0"></div>
<div class="b" style="left:1260px;top:73px;width:15px;height:15px"><svg width="11" height="11" viewBox="0 0 11 11"><path d="M1.5 7.5 H9.5 L5.5 3 Z" fill="#f4f4f4"/></svg></div>
<div class="b" style="left:1260px;top:279px;width:15px;height:197px"></div>
<div class="b" style="left:1260px;top:691px;width:15px;height:15px"><svg width="11" height="11" viewBox="0 0 11 11"><path d="M1.5 3.5 H9.5 L5.5 8 Z" fill="#f4f4f4"/></svg></div>
<!-- h scrollbar -->
<div class="a" style="left:361px;top:706px;width:898px;height:17px;background:#f2f2f2;border-top:1px solid #e0e0e0"></div>
<div class="a" style="left:1259px;top:706px;width:17px;height:17px;background:#e2e2e2"></div>
<div class="b" style="left:362px;top:707px;width:15px;height:15px"><svg width="11" height="11" viewBox="0 0 11 11"><path d="M7.500 1.500 V9.500 L3 5.500 Z" fill="#f4f4f4"/></svg></div>
<div class="b" style="left:643px;top:707px;width:280px;height:15px"></div>
<div class="b" style="left:1243px;top:707px;width:15px;height:15px"><svg width="11" height="11" viewBox="0 0 11 11"><path d="M3.500 1.500 V9.500 L8 5.500 Z" fill="#f4f4f4"/></svg></div>

<!-- ===== artwork on canvas ===== -->
<svg id="art" style="left:0;top:0" width="1280" height="800" viewBox="0 0 1280 800">
 <defs>
  <clipPath id="cv"><rect x="416" y="111" width="843" height="595"/></clipPath>
  <linearGradient id="iris" x1="0" y1="0" x2="0" y2="1"><stop offset="0" stop-color="#06066a"/><stop offset=".45" stop-color="#12127c"/><stop offset=".75" stop-color="#4a4ab8"/><stop offset="1" stop-color="#2a2a98"/></linearGradient>
  <linearGradient id="neck" x1="0" y1="0" x2="0" y2="1"><stop offset="0" stop-color="#f9c6ba"/><stop offset=".5" stop-color="#fbdcca"/><stop offset="1" stop-color="#fdeee2"/></linearGradient>
  <linearGradient id="arm" x1="0" y1="0" x2="0" y2="1"><stop offset="0" stop-color="#f9c2b6"/><stop offset=".1" stop-color="#fbd2c2"/><stop offset=".28" stop-color="#fde6d8"/><stop offset=".5" stop-color="#fdeee2"/></linearGradient>
  <radialGradient id="nose"><stop offset="0" stop-color="#f8cca8" stop-opacity=".55"/><stop offset="1" stop-color="#f8cca8" stop-opacity="0"/></radialGradient>
  <radialGradient id="blush"><stop offset="0" stop-color="#f9c0c0" stop-opacity=".9"/><stop offset="1" stop-color="#f9c0c0" stop-opacity="0"/></radialGradient>
 </defs>
 <g clip-path="url(#cv)" fill="none" stroke-linecap="round" stroke-linejoin="round">
  <!-- skin: neck -->
  <path d="M576 376 L600 372 L622 370 L616 395 L612 406 L600 418 L586 427 L573 432 L568 425 L568 410 L572 395 Z" fill="url(#neck)"/>
  <circle cx="567" cy="399" r="3" fill="#fbdccc"/>
  <!-- skin: face -->
  <path d="M563 240 L565 215 L568 203 L574 199 L585 202 L595 208 L603 210 L605 200 L610 194 L617 193 L622 198 L625 208 L630 214 L636 225 L642 234 L644 220 L648 212 L654 209 L660 211 L664 220 L667 235 L672 245 L678 258 L684 270 L681 290 L673 315 L662 340 L656 350 L652 364 L646 370 L630 368 L600 372 L576 377 L567 365 L555 340 L547 310 L546 295 L551 275 L556 255 L560 240 Z" fill="#fdeee2" stroke="#fdeee2" stroke-width="3"/>
  <!-- ear -->
  <path d="M697 296 C700 289,707 289,707 297 C707 307,700 316,692 323 C687 327,684 322,688 318 C693 312,695 304,697 296 Z" fill="#fde6d4" stroke="#f0dcc0" stroke-width="1"/>
  <!-- pink shading under bangs -->
  <path d="M571 205 L562 242 L570 233 Z" fill="#f9c4bc"/>
  <path d="M595 214 L593 234 L604 262 L603 236 Z" fill="#f9c4bc"/>
  <path d="M617 208 L607 260 L620 236 L637 247 L623 221 Z" fill="#f9c8be"/>
  <path d="M657 214 L655 246 L667 248 L662 226 Z" fill="#f9c4bc"/>
  <!-- blush -->
  <ellipse cx="564" cy="296" rx="17" ry="12" fill="url(#blush)"/>
  <ellipse cx="641" cy="315" rx="23" ry="14" fill="url(#blush)"/>
  <path d="M554 293 L567 288 M556 297 L570 291 M559 301 L573 295 M627 312 L641 306 M631 317 L646 310 M637 321 L652 314" stroke="#f4a8a8" stroke-width=".8"/>
  <ellipse cx="588" cy="306" rx="9" ry="12" fill="url(#nose)"/>
  <!-- jaw outline -->
  <path d="M551 275 L546 295 L547 310 L555 340 L567 365 L576 377 L600 372 L630 368 L652 364" stroke="#ecd8a8" stroke-width="1.800"/>
  <path d="M578 347 C585 352,595 353,606 352" stroke="#dcc080" stroke-width="1"/>
  <!-- eyes -->
  <path d="M564 257 L566 246 L575 239 L588 239 L596 243 L582 250 L573 276 L566 266 Z" fill="#dde6f0"/>
  <path d="M565 259 L572 276 L576 262 L572 256 Z" fill="#fff"/>
  <ellipse cx="585" cy="261.500" rx="11.500" ry="21" transform="rotate(14 585 261.500)" fill="url(#iris)"/>
  <ellipse cx="577.500" cy="259" rx="2.800" ry="1.800" fill="#fff"/>
  <path d="M577 270 C578 276,585 277,587 270" stroke="#b8b8ee" stroke-width="1"/>
  <path d="M562 257 C562.2 254.7,561.7 246.8,563 243 C564.3 239.2,566.8 236.0,570 234 C573.2 232.0,578.2 230.8,582 231 C585.8 231.2,590.2 233.0,593 235 C595.8 237.0,597.5 240.2,599 243 C600.5 245.8,601.5 250.5,602 252 L598 250 C597.3 248.7,596.0 244.2,594 242 C592.0 239.8,589.2 237.7,586 237 C582.8 236.3,578.2 236.7,575 238 C571.8 239.3,568.9 242.0,567 245 C565.1 248.0,564.1 254.2,563.5 256 Z" fill="#fdf0dc" stroke="#141c08" stroke-width="1.200"/>
  <path d="M635 262 L650 254 L664 256 L644 276 L645 291 L637 276 Z" fill="#dde6f0"/>
  <path d="M636 264 L644 290 L646 274 Z" fill="#fff"/>
  <ellipse cx="656.500" cy="274.500" rx="12.500" ry="21.500" transform="rotate(16 656.500 274.500)" fill="url(#iris)"/>
  <ellipse cx="649" cy="274" rx="3.600" ry="2" fill="#fff"/>
  <path d="M650 281 C651 288,658 288,659 281" stroke="#b8b8ee" stroke-width="1"/>
  <path d="M629 257 C630.8 255.8,635.7 251.8,640 250 C644.3 248.2,650.7 246.2,655 246 C659.3 245.8,663.0 247.0,666 249 C669.0 251.0,671.5 254.8,673 258 C674.5 261.2,675.2 265.7,675 268 C674.8 270.3,672.5 271.3,672 272 L668 259 C666.3 257.8,661.8 252.8,658 252 C654.2 251.2,649.3 252.5,645 254 C640.7 255.5,634.1 260.2,632 261 C629.9 261.8,632.4 258.9,632.5 258.5 Z" fill="#fdf0dc" stroke="#141c08" stroke-width="1.200"/>
  <circle cx="553" cy="274" r=".8" fill="#503010"/>
  <!-- left arm skin -->
  <path d="M500 500 L510 498 L512 520 L510 545 L509 570 L510 584 L505 587 L501 580 L499 550 L499 520 Z" fill="#fde8d6"/>
  <path d="M500 500 L510 498 L512 510 L500 512 Z" fill="#fbd8cc"/>
  <!-- right arm skin -->
  <path d="M637 520 L645 507 L655 505 L667 508 L671 518 L675 550 L680 590 L685 625 L688 650 L694 665 L696 690 L696 706 L668 706 L662 690 L658 665 L656 645 L652 620 L647 590 L642 555 L638 530 Z" fill="url(#arm)" stroke="#f2dcb4" stroke-width="1"/>
  <path d="M645 507 L655 505 L667 508 L670 514 L642 516 Z" fill="#fdeee2"/>
  <path d="M642 517 C652 514,662 514,671 516" stroke="#d0d0d0" stroke-width="1.200"/>
  <path d="M672 693 L676 706 M680 692 L683 706 M688 694 L690 706" stroke="#f0d0b0" stroke-width=".8"/>

  <!-- grey line-art (blouse) -->
  <g stroke="#d4d4d4" stroke-width="1.300">
   <path d="M535 402 L520 410 L510 425 L500 438 L487 447 L485 455 L487 475 L492 490 L510 487"/>
   <path d="M533 404 L519 412 L508 428"/>
   <path d="M494 492 L497 498 L510 498 M492 490 L510 498"/>
   <path d="M547 398 L570 397 M547 398 L540 420 L535 439 L550 435 L568 431"/>
   <path d="M551 400 L541 436"/>
   <path d="M612 406 L600 418 L586 427 L573 432"/>
   <path d="M615 403 L628 415 L617 440 L604 464 L590 448 L575 437"/>
   <path d="M622 421 L615 440 M631 418 L624 438"/>
   <path d="M640 422 L658 432 L670 442 L675 455 L682 467 L688 474 L690 475 L685 490 L680 503 L676 510 L670 511 L671 518"/>
   <path d="M645 424 L660 436"/>
   <path d="M782 372 L760 378 L735 387 L712 398 L695 408 L681 415"/>
   <path d="M785 447 L760 448 L735 455 L710 463 L695 470 L688 474"/>
  </g>
  <!-- lavender line-art (skirt) -->
  <g stroke="#a6a6ee" stroke-width="1.300">
   <path d="M538 402 C536.7 405.8,532.7 417.0,530 425 C527.3 433.0,524.3 441.7,522 450 C519.7 458.3,517.5 466.7,516 475 C514.5 483.3,513.8 490.8,513 500 C512.2 509.2,511.7 520.0,511 530 C510.3 540.0,510.3 550.0,509 560 C507.7 570.0,504.8 580.8,503 590 C501.2 599.2,499.5 606.7,498 615 C496.5 623.3,495.0 631.7,494 640 C493.0 648.3,492.7 656.7,492 665 C491.3 673.3,490.7 683.2,490 690 C489.3 696.8,488.3 703.3,488 706"/>
   <path d="M509 565 C508.2 570.0,505.5 585.8,504 595 C502.5 604.2,501.2 611.7,500 620 C498.8 628.3,497.7 635.5,497 645 C496.3 654.5,496.2 671.7,496 677"/>
   <path d="M492 670 C492.2 674.2,492.7 689.0,493 695 C493.3 701.0,493.8 704.2,494 706"/>
   <path d="M510 540 C510.2 543.3,510.3 552.5,511 560 C511.7 567.5,513.2 578.3,514 585 C514.8 591.7,515.7 597.5,516 600"/>
   <path d="M630 415 L640 423"/>
   <path d="M640 423 C638.3 427.2,633.2 440.8,630 448.5 C626.8 456.2,623.2 463.5,621 469.5 C618.8 475.5,617.4 480.5,616.5 484.5 C615.6 488.5,615.8 492.0,615.7 493.5"/>
   <path d="M622 524 C621.1 526.7,618.0 534.8,616.5 540 C615.0 545.2,613.8 551.3,613 555 C612.2 558.7,612.2 560.8,612 562"/>
   <path d="M612 562 L600 582"/>
   <path d="M609 566 C611.7 569.2,618.5 578.2,625 585 C631.5 591.8,644.2 603.3,648 607"/>
   <path d="M612 567 C615.0 570.7,623.7 583.0,630 589 C636.3 595.0,646.7 600.7,650 603"/>
   <path d="M684 610 C688.3 611.3,700.7 615.0,710 618 C719.3 621.0,730.0 624.8,740 628 C750.0 631.2,762.5 635.5,770 637 C777.5 638.5,782.5 637.0,785 637"/>
   <path d="M785 637 C787.5 636.2,792.5 633.8,800 632 C807.5 630.2,822.0 627.8,830 626 C838.0 624.2,841.7 623.3,848 621 C854.3 618.7,862.8 613.8,868 612 C873.2 610.2,877.2 610.3,879 610"/>
   <path d="M879 610 C878.7 611.7,877.0 615.8,877 620 C877.0 624.2,877.7 630.0,879 635 C880.3 640.0,881.8 644.5,885 650 C888.2 655.5,893.8 662.7,898 668 C902.2 673.3,906.5 677.8,910 682 C913.5 686.2,917.5 691.2,919 693"/>
   <path d="M919 693 L911 706"/>
   <path d="M684 608 C689.2 609.3,704.0 613.0,715 616 C726.0 619.0,738.8 622.0,750 626 C761.2 630.0,772.0 636.3,782 640 C792.0 643.7,801.5 646.2,810 648 C818.5 649.8,829.2 650.5,833 651"/>
  </g>
  <!-- yellow line-art (ribbon, tie, sailor collar) -->
  <g stroke="#f2ce6e" stroke-width="1.500">
   <path d="M666.2 202.1 C668.7 202.5,676.4 203.4,680.9 204.7 C685.4 206.0,689.2 207.6,693.2 209.7 C697.2 211.8,703.0 215.8,705 217"/>
   <path d="M666.2 202.1 C666.1 203.0,665.5 205.1,665.7 207.5 C665.9 209.9,666.6 213.7,667.4 216.5 C668.2 219.3,669.9 222.8,670.7 224.4 C671.5 226.0,672.1 225.7,672.4 226"/>
   <path d="M672.4 226 L669.6 227.2"/>
   <path d="M669.6 227.2 C670.0 228.0,671.3 229.9,671.9 232.2 C672.5 234.5,672.5 237.8,673 241.2 C673.5 244.6,673.3 249.7,674.7 252.5 C676.1 255.3,679.9 256.0,681.4 258 C682.9 260.0,683.3 263.2,683.7 264.3"/>
   <path d="M683.7 264.3 C685.1 263.4,689.3 261.3,692 259.2 C694.7 257.1,697.9 254.0,700 251.4 C702.1 248.8,703.8 244.8,704.5 243.5"/>
   <path d="M705 217 C704.8 217.8,704.0 220.1,704 222 C704.0 223.9,704.8 227.2,705 228.3"/>
   <path d="M705 217.5 C706.4 216.7,710.6 214.7,713.5 212.6 C716.4 210.5,719.1 207.3,722.5 205.2 C725.9 203.1,729.6 201.3,733.7 200.2 C737.8 199.0,745.0 198.6,747.2 198.3"/>
   <path d="M747.2 198.3 L751.7 215.9"/>
   <path d="M751.7 215.9 L757.1 213.1"/>
   <path d="M757.1 213.1 C757.2 213.8,756.5 215.1,757.6 217 C758.7 218.9,762.5 223.2,763.5 224.4"/>
   <path d="M763.5 224.4 C762.9 225.7,760.4 229.4,759.6 232.2 C758.8 235.0,757.9 238.2,758.5 241.2 C759.1 244.2,762.7 248.7,763.5 250.2"/>
   <path d="M763.5 250.2 L746.1 245.2"/>
   <path d="M700 367 C700.8 366.2,700.0 363.2,705 362 C710.0 360.8,721.7 360.0,730 360 C738.3 360.0,746.3 360.0,755 362 C763.7 364.0,777.5 370.3,782 372"/>
   <path d="M782 372 C780.0 371.5,776.2 370.2,770 369 C763.8 367.8,754.2 365.5,745 365 C735.8 364.5,722.8 365.2,715 366 C707.2 366.8,700.8 369.3,698 370"/>
   <path d="M645 422 C648.3 421.2,657.5 418.3,665 417 C672.5 415.7,682.0 414.3,690 414 C698.0 413.7,704.7 413.7,713 415 C721.3 416.3,731.3 419.2,740 422 C748.7 424.8,758.3 429.0,765 432 C771.7 435.0,776.7 437.5,780 440 C783.3 442.5,784.2 445.8,785 447"/>
   <path d="M785 447 C781.7 445.2,773.3 439.7,765 436 C756.7 432.3,745.0 427.8,735 425 C725.0 422.2,715.0 419.8,705 419 C695.0 418.2,684.7 419.2,675 420 C665.3 420.8,651.7 423.3,647 424"/>
   <path d="M562.5 435 C562.5 436.5,562.2 440.0,562.2 444 C562.2 448.0,562.1 453.5,562.5 459 C562.9 464.5,563.6 471.1,564.7 477 C565.8 482.9,566.8 488.7,569.2 494.2 C571.6 499.7,576.2 503.9,579 510 C581.8 516.1,584.6 527.5,585.7 531"/>
   <path d="M562.2 444 C563.1 444.6,565.5 447.2,567.7 447.7 C569.9 448.2,574.0 447.1,575.2 447"/>
   <path d="M576.7 438.7 C576.5 440.1,575.6 443.9,575.7 447 C575.8 450.1,576.2 453.2,577.5 457.5 C578.8 461.8,581.2 468.0,583.5 472.5 C585.8 477.0,587.8 481.5,591 484.5 C594.2 487.5,598.5 488.8,603 490.5 C607.5 492.2,612.5 493.9,618 495 C623.5 496.1,630.5 495.9,636 497.2 C641.5 498.4,646.5 500.5,651 502.5 C655.5 504.5,660.1 507.3,663 509.2 C665.9 511.1,667.3 513.0,668.2 513.7"/>
   <path d="M564.7 477 L571.5 489"/>
   <path d="M589 482 L603 494.2"/>
   <path d="M569.2 494.2 C571.8 495.1,579.9 496.9,585 499.5 C590.1 502.1,595.0 506.0,600 510 C605.0 514.0,612.5 521.2,615 523.5"/>
   <path d="M615 523.5 C616.5 523.0,620.5 522.2,624 520.5 C627.5 518.8,632.0 514.8,636 513 C640.0 511.2,644.0 510.2,648 510 C652.0 509.8,656.7 510.8,660 511.5 C663.3 512.2,666.7 513.6,668 514"/>
   <path d="M585.7 531 C588.1 529.0,596.4 521.1,600 519 C603.6 516.9,605.0 517.5,607.5 518.2 C610.0 519.0,613.8 522.6,615 523.5"/>
   <path d="M572.2 495 C573.3 496.5,577.1 500.5,579 504 C580.9 507.5,582.4 511.5,583.5 516 C584.6 520.5,585.3 528.5,585.7 531"/>
  </g>
  <!-- green line-art (hair) -->
  <g stroke="#4fc443" stroke-width="1.500">
   <path d="M559 251 C558.2 248.8,555.2 242.3,554 238 C552.8 233.7,552.2 229.7,552 225 C551.8 220.3,552.2 214.8,552.5 210 C552.8 205.2,552.8 201.0,554 196 C555.2 191.0,557.8 184.3,560 180 C562.2 175.7,564.5 172.8,567 170 C569.5 167.2,571.7 165.7,575 163 C578.3 160.3,582.8 156.5,587 154 C591.2 151.5,595.3 149.8,600 148 C604.7 146.2,609.8 144.6,615 143.5 C620.2 142.4,625.8 142.0,631 141.5 C636.2 141.0,641.2 140.6,646 140.5 C650.8 140.4,655.0 140.3,660 141 C665.0 141.7,671.0 143.0,676 144.5 C681.0 146.0,685.7 148.0,690 150 C694.3 152.0,698.3 154.3,702 156.5 C705.7 158.7,708.8 160.7,712 163 C715.2 165.3,718.3 168.0,721 170.5 C723.7 173.0,725.8 175.5,728 178 C730.2 180.5,732.5 183.5,734 185.5 C735.5 187.5,736.2 188.4,737 190 C737.8 191.6,738.7 194.2,739 195"/>
   <path d="M572 197 C571.0 200.0,567.7 209.2,566 215 C564.3 220.8,562.8 226.2,562 232 C561.2 237.8,561.2 247.0,561 250"/>
   <path d="M572 197 C571.8 200.0,570.7 209.5,571 215 C571.3 220.5,573.5 227.5,574 230"/>
   <path d="M573 218 C574.5 217.1,578.8 213.4,582 212.5 C585.2 211.6,588.7 211.6,592 212.5 C595.3 213.4,599.2 215.9,602 218 C604.8 220.1,607.8 223.8,609 225"/>
   <path d="M574 221 C575.5 220.1,580.0 216.4,583 215.5 C586.0 214.6,589.2 214.8,592 215.5 C594.8 216.2,598.7 219.2,600 220"/>
   <path d="M594 198 C594.0 200.8,594.2 209.3,594 215 C593.8 220.7,593.2 229.2,593 232"/>
   <path d="M594 198 C594.7 200.8,596.5 208.8,598 215 C599.5 221.2,601.8 229.2,603 235 C604.2 240.8,604.7 245.0,605 250 C605.3 255.0,605.0 262.5,605 265"/>
   <path d="M616 199 C615.8 201.7,615.7 209.0,615 215 C614.3 221.0,613.2 228.3,612 235 C610.8 241.7,609.2 249.2,608 255 C606.8 260.8,605.5 267.5,605 270"/>
   <path d="M616 199 C616.7 201.7,618.2 209.8,620 215 C621.8 220.2,624.2 224.8,627 230 C629.8 235.2,635.3 243.3,637 246"/>
   <path d="M654 202 C654.5 205.0,656.7 214.5,657 220 C657.3 225.5,656.3 230.8,656 235 C655.7 239.2,655.2 243.3,655 245"/>
   <path d="M654 202 C655.0 204.7,658.0 212.5,660 218 C662.0 223.5,664.8 230.2,666 235 C667.2 239.8,666.8 245.0,667 247"/>
   <path d="M634 229 C635.0 228.2,637.3 225.5,640 224.5 C642.7 223.5,646.7 222.6,650 223 C653.3 223.4,657.0 225.5,660 227 C663.0 228.5,666.7 231.2,668 232"/>
   <path d="M635 231 C636.2 230.3,639.3 227.8,642 227 C644.7 226.2,648.2 225.7,651 226 C653.8 226.3,657.7 228.5,659 229"/>
   <path d="M521 320 C522.3 319.8,526.3 319.5,529 318.5 C531.7 317.5,534.7 315.9,537 314 C539.3 312.1,542.0 308.2,543 307"/>
   <path d="M540 310 C539.5 313.3,536.8 322.5,537 330 C537.2 337.5,539.2 347.5,541 355 C542.8 362.5,546.8 369.5,548 375 C549.2 380.5,548.5 384.7,548 388 C547.5 391.3,545.5 393.8,545 395"/>
   <path d="M550 330 C549.5 332.5,547.0 339.7,547 345 C547.0 350.3,549.0 357.0,550 362 C551.0 367.0,552.5 370.0,553 375 C553.5 380.0,553.0 389.2,553 392"/>
   <path d="M555 378 L562 397"/>
   <path d="M548 388 L553 378"/>
   <path d="M705 229 C705.2 228.0,705.3 224.7,706 223 C706.7 221.3,707.4 220.1,709 218.7 C710.6 217.3,713.5 215.2,715.7 214.5 C718.0 213.8,719.9 213.4,722.5 214.5 C725.1 215.6,728.5 217.8,731.5 221 C734.5 224.2,737.9 228.5,740.5 233.4 C743.1 238.3,745.0 245.1,747.2 250.2 C749.5 255.2,751.8 260.1,754 263.7 C756.2 267.3,758.5 269.1,760.7 271.6 C762.9 274.2,764.6 276.8,767 279 C769.4 281.2,770.7 281.5,775 285 C779.3 288.5,788.5 296.0,793 300 C797.5 304.0,799.2 306.0,802 309 C804.8 312.0,807.3 314.8,810 318 C812.7 321.2,815.5 324.7,818 328 C820.5 331.3,823.0 334.8,825 338 C827.0 341.2,828.7 344.2,830 347 C831.3 349.8,832.4 352.0,833 355 C833.6 358.0,833.7 361.7,833.5 365 C833.3 368.3,832.9 371.7,832 375 C831.1 378.3,829.7 382.3,828 385 C826.3 387.7,824.2 389.3,822 391 C819.8 392.7,818.2 393.5,815 395 C811.8 396.5,805.0 399.2,803 400"/>
   <path d="M803 400 C804.0 398.8,807.3 395.5,809 393 C810.7 390.5,812.1 387.7,813 385 C813.9 382.3,814.3 379.5,814.5 377 C814.7 374.5,815.1 373.7,814 370 C812.9 366.3,810.7 360.0,808 355 C805.3 350.0,802.7 345.5,798 340 C793.3 334.5,785.5 327.3,780 322 C774.5 316.7,770.0 312.0,765 308 C760.0 304.0,755.0 301.3,750 298 C745.0 294.7,740.0 291.8,735 288 C730.0 284.2,723.8 278.7,720.2 275 C716.6 271.3,715.5 269.4,713.5 266 C711.5 262.6,709.4 259.2,707.9 254.7 C706.4 250.2,705.0 243.3,704.5 239 C704.0 234.7,704.9 230.7,705 229"/>
   <path d="M757 270 C758.5 271.0,763.0 274.7,766 276 C769.0 277.3,772.0 277.8,775 278 C778.0 278.2,781.0 278.0,784 277.5 C787.0 277.0,791.5 275.4,793 275"/>
   <path d="M762 275 C763.5 275.7,768.0 278.2,771 279 C774.0 279.8,778.5 279.8,780 280"/>
   <path d="M772 312 C772.5 314.2,775.0 320.7,775 325 C775.0 329.3,772.5 335.8,772 338"/>
   <path d="M772 312 L778 322"/>
   <path d="M727 282 C725.8 286.7,722.5 301.2,720 310 C717.5 318.8,714.8 326.7,712 335 C709.2 343.3,705.8 352.8,703 360 C700.2 367.2,698.8 371.3,695 378 C691.2 384.7,683.7 395.0,680 400 C676.3 405.0,675.8 406.0,673 408 C670.2 410.0,664.7 411.3,663 412"/>
   <path d="M678 258 C677.0 261.7,673.7 273.0,672 280 C670.3 287.0,668.7 296.7,668 300"/>
   <path d="M695 258 C694.2 261.7,692.5 273.0,690 280 C687.5 287.0,683.8 295.3,680 300 C676.2 304.7,669.2 306.7,667 308"/>
   <path d="M680 300 C677.8 305.0,670.8 322.5,667 330 C663.2 337.5,659.3 340.0,657 345 C654.7 350.0,653.3 355.0,653 360 C652.7 365.0,653.5 370.8,655 375 C656.5 379.2,659.0 382.0,662 385 C665.0 388.0,672.0 391.3,673 393 C674.0 394.7,668.8 394.7,668 395"/>
   <path d="M672 328 C670.3 331.7,664.0 342.7,662 350 C660.0 357.3,659.5 366.2,660 372 C660.5 377.8,663.0 381.3,665 385 C667.0 388.7,670.8 392.5,672 394"/>
   <path d="M687 372 C686.2 374.2,684.0 380.8,682 385 C680.0 389.2,674.5 397.0,675 397 C675.5 397.0,683.0 389.2,685 385 C687.0 380.8,686.7 374.2,687 372"/>
   <path d="M640 407 C642.5 406.2,650.0 404.3,655 402 C660.0 399.7,667.5 394.5,670 393"/>
   <path d="M675 268 L680 262"/>
   <path d="M670 272 L676 285"/>
  </g>
 </g>
</svg>


<!-- ===== document tab ===== -->
<div class="a" style="left:359px;top:726px;width:158px;height:22px;background:#b6b6ff;border:1px solid #8484f4;border-radius:3px"></div>
<svg style="left:363px;top:729px" width="14" height="16" viewBox="0 0 14 16"><defs><linearGradient id="dig" x1="0" y1="0" x2="1" y2="0"><stop offset="0" stop-color="#d8f080"/><stop offset=".55" stop-color="#b8e860"/><stop offset=".75" stop-color="#f8e040"/><stop offset="1" stop-color="#f07030"/></linearGradient></defs><path d="M.500 .500 H10 L13.500 4 V15.500 H.500 Z" fill="#1e6a2e" stroke="#1a3a7a" stroke-width="1"/><path d="M1 1 H9.500 V4.500 H1 Z" fill="#2a66c8"/><circle cx="7.300" cy="8" r="5.200" fill="url(#dig)"/><path d="M1 9.500 L12 14" stroke="#8a5a1a" stroke-width="1.600"/><path d="M1 11.500 L10 15" stroke="#c89030" stroke-width="1"/><path d="M10 .500 V4 H13.500 Z" fill="#fff"/></svg>



<!-- ===== status bar ===== -->

<div class="a sk" style="left:1152px;top:752px;width:16px"><span style="transform:scaleX(0.62)">Shift</span></div>
<div class="a sk" style="left:1170px;top:752px;width:16px"><span style="transform:scaleX(0.72)">Ctrl</span></div>
<div class="a sk" style="left:1188px;top:752px;width:16px"><span style="transform:scaleX(0.85)">Alt</span></div>
<div class="a sk" style="left:1206px;top:752px;width:16px"><span style="transform:scaleX(0.66)">SPC</span></div>
<div class="a sk" style="left:1224px;top:752px;width:16px"><svg style="left:1px;top:1px" width="12" height="12" viewBox="0 0 12 12"><path d="M6 0 L9 3 H3 Z M6 12 L9 9 H3 Z M0 6 L3 3 V9 Z M12 6 L9 3 V9 Z" fill="#111"/><rect x="4" y="4" width="4" height="4" fill="#fff" stroke="#111" stroke-width=".6"/></svg></div>
<div class="a sk" style="left:1242px;top:752px;width:16px"><span style="transform:scaleX(0.74)">Any</span></div>
<div class="a sk" style="left:1260px;top:752px;width:16px"><svg style="left:1px;top:1px" width="12" height="12" viewBox="0 0 12 12"><path d="M1 11 L2.500 7.500 L9 1 L11 3 L4.500 9.500 Z" fill="#fff" stroke="#111" stroke-width="1"/></svg></div>

<!-- ===== taskbar ===== -->
<div class="a" style="left:0;top:769px;width:1280px;height:31px;background:linear-gradient(to bottom,#b8b8b8 0 1px,#585858 1px 2px,#b2b4b2 2px 3px,#8e908e 3px,#6c6e6c 9px,#484848 16px,#1c1d20 16px 100%)"></div>
<!-- start orb -->
<svg style="left:9px;top:768px" width="37" height="32" viewBox="9 768 37 32">
 <defs>
  <radialGradient id="orbb" cx=".5" cy="1" r=".95"><stop offset="0" stop-color="#00e8ff"/><stop offset=".3" stop-color="#0aa0d8"/><stop offset=".6" stop-color="#0a66a8"/><stop offset="1" stop-color="#0a3a66"/></radialGradient>
  <linearGradient id="orbg" x1="0" y1="0" x2="0" y2="1"><stop offset="0" stop-color="#fff" stop-opacity=".62"/><stop offset="1" stop-color="#fff" stop-opacity=".18"/></linearGradient>
  <linearGradient id="fr" x1="0" y1="0" x2="0" y2="1"><stop offset="0" stop-color="#e84818"/><stop offset="1" stop-color="#f49028"/></linearGradient>
  <linearGradient id="fg" x1="0" y1="0" x2="0" y2="1"><stop offset="0" stop-color="#58a020"/><stop offset="1" stop-color="#b0d850"/></linearGradient>
  <linearGradient id="fb" x1="0" y1="0" x2="0" y2="1"><stop offset="0" stop-color="#58b0f0"/><stop offset="1" stop-color="#1878d0"/></linearGradient>
  <linearGradient id="fy" x1="0" y1="0" x2="0" y2="1"><stop offset="0" stop-color="#fcd850"/><stop offset="1" stop-color="#f8a818"/></linearGradient>
 </defs>
 <circle cx="27.300" cy="786.400" r="16.800" fill="#0a121c"/>
 <circle cx="27.300" cy="786.400" r="15.400" fill="url(#orbb)"/>
 <path d="M12.300 785.500 A15 15 0 0 1 42.300 785.500 C36 788.500,20 789.500,12.300 785.500 Z" fill="url(#orbg)"/>
 <path d="M20.600 775.800 C23 774.600,25.500 774.700,28 775.800 L26.700 782.800 C24.500 781.800,22 781.700,19 783 Z" fill="url(#fr)"/>
 <path d="M29.500 776.500 C32 777.600,34.500 777.500,37.800 776 L36.300 783.600 C33.500 785,31 785,28.200 783.800 Z" fill="url(#fg)"/>
 <path d="M18.600 784.600 C21.500 783.300,24 783.400,26.400 784.500 L25 792 C22.500 791,20 791,16.600 792.600 Z" fill="url(#fb)"/>
 <path d="M27.800 785.500 C30.500 786.600,33 786.500,36 785.200 L34.400 792.800 C31.500 794.200,29 794.200,26.300 793 Z" fill="url(#fy)"/>
</svg>
<!-- tray -->
<svg style="left:1136px;top:774px" width="130" height="24" viewBox="0 0 130 24">
 <path d="M9.500 6 L4 11 L9.500 16" fill="none" stroke="#fff" stroke-width="2"/>
 <path d="M18 3 C21 1,25 4,28 3 V11 H18 Z" fill="#e81030"/>
 <circle cx="26" cy="14" r="6" fill="#f8a010" stroke="#fff0c0" stroke-width=".8"/>
 <text x="23.800" y="17.500" font-size="9" font-weight="bold" font-family="Liberation Sans,sans-serif" fill="#402000">1</text>
 <path d="M36 9 H40 L45 4 V19 L40 14 H36 Z" fill="#e07050" stroke="#b04020" stroke-width=".6"/>
 <path d="M47 6 C49 9,49 14,47 17 M49.500 4 C52.500 8,52.500 15,49.500 19" fill="none" stroke="#c05030" stroke-width="1.200"/>
 <circle cx="61" cy="11.500" r="8" fill="#2a8ae0" stroke="#e8f0ff" stroke-width="1"/>
 <circle cx="59" cy="7.500" r="2.500" fill="#fff"/><path d="M55 16 C56 11,62 11,63 16 Z" fill="#fff"/>
 <path d="M66 11 L71 20 H61 Z" fill="#f8d020" stroke="#806000" stroke-width=".5"/>
 <path d="M84 2 L74 13 H79 L76 21 L87 9 H82 Z" fill="#f8a020" stroke="#fff" stroke-width="1"/>
 <text x="101" y="20" font-size="20" font-family="Liberation Sans,sans-serif" fill="#fff">3</text>
 <text x="113" y="9.500" font-size="10" font-weight="bold" font-family="Liberation Sans,sans-serif" fill="#fff" textLength="12" lengthAdjust="spacingAndGlyphs">18</text>
 <text x="113" y="20" font-size="9" font-weight="bold" font-family="Liberation Sans,sans-serif" fill="#fff" textLength="12.500" lengthAdjust="spacingAndGlyphs">PM</text>
</svg>

<!-- ===== redaction scribbles ===== -->
<svg id="blobs" style="left:0;top:0;z-index:50" width="1280" height="800" viewBox="0 0 1280 800">
 <g fill="#8080ff">
  <!-- top scribble -->
  <path d="M92 0 L94 10 L95.500 18 L97 22 L99 24.500 L105 30.500 L112 36 L135 40 L156 36.500 L166.500 40 L174 44.500 L186 48 L200 50.200 L240 51.700 L280 52.300 L310 51.500 L330 48.500 L345 47 L370 48 L392 49 L410 53 L440 55 L480 54 L520 51 L550 52 L570 53 L591 52.500 L616 50 L628 48.500 L635 46.500 L640 44.500 L646.250 38.750 L650 33.500 L652.500 28.750 L654.200 24 L654.700 18.750 L654 10 L652.500 3.750 L650 0 Z"/>
  <!-- upper-left scribble -->
  <path d="M0 45 C6 42,12 40,18 40 C26 40,32 41,37 43 C44 38,52 35,62 34 C72 34,82 38,91 48 C97 43,104 39,112 36 L150 34 L154.500 37 C158 40,164 45,168 50 C171 55,173.200 62,173.200 70 L173.200 90 C173.200 98,171 105,168 110 C166 114,164 116,162 117.500 C158 121,154 123,150 125 C146 127,142 128.500,136.500 128.700 C128 128.500,118 124,111 117.500 C104 123,92 129,78 129.500 C68 129.500,58 127,53 124 C48 127,42 128.500,34.500 128.500 C26 128.500,18 125,12 120 C8 117,4 113,0 110 Z"/>
  <!-- left big scribble -->
  <path d="M0 390 C6 382,13 377,20 374 C25 372.500,30 371.500,33 369 C35 364,41 358,48 355 C54 353,62 352.500,70 352.500 C90 352,108 352.500,120 352 C128 350,140 350.500,146 352.500 C154 355,161 362,164 372 C166 380,167 400,168.500 420 C170 440,172 460,174 480 C176 500,178 520,179 540 C179.500 556,178.500 572,177 584 C175 600,172 615,170.500 628 C169 645,169.500 680,169 700 C168 714,163 726,155 732 C149 737,143 739.500,137 740 C120 739,100 735.500,80 732.500 C60 730,40 726,25 719 C12 712,4 702,0 690 Z"/>
  <!-- bottom scribble -->
  <path d="M61 800 C57 795,54 789,52.500 782 C52 776,52.500 772,53 770 C54 765,55.500 762,57 760 C60 755,63 752,67 750 C70 748,73 746.500,76.500 745 C81 743.500,86 742.500,92 742 C100 741,105 740.500,110 740 C125 739,140 739,150 739.500 C162 740.500,172 743,180 746 C190 748,205 747.500,220 747 C240 746.500,260 745.500,275 744 C290 742,305 740,320 740 C340 740.500,360 744,380 744.500 C395 744.500,404 744,408 744.200 C414 745,418 746.500,422 748 C427 750,432 752,438 753 C444 754,450 754,456 753.500 C470 752,485 750.500,500 751 C515 751.500,527 753,534 757.500 C541 762,545.500 770,547 780 C548 788,547 795,545 800 Z"/>
 </g>
</svg>

<!-- ===== text labels ===== -->
<div class="x" style="left:14.0px;top:26.8px;font-size:10.81px">ไฟล์ (F)</div>
<div class="x" style="left:72.0px;top:26.7px;font-size:10.88px">แก้ไข (E)</div>
<div class="x" style="left:7.0px;top:128.7px;font-size:8.00px">หมุน</div>
<div class="x" style="left:71.5px;top:127.7px;font-size:9.50px;letter-spacing:-0.05px">+000฿</div>
<div class="x" style="left:18.1px;top:157.6px;font-size:11.00px;letter-spacing:-0.01px">Paints Effect</div>
<div class="x" style="left:14.4px;top:177.9px;font-size:9.96px">พื้นผิว</div>
<div class="x" style="left:73.6px;top:177.3px;font-size:11.34px">(ไม่มี)</div>
<div class="x" style="left:16.0px;top:198.7px;font-size:9.50px;letter-spacing:-0.27px;color:#b4b4b4">Scale</div>
<div class="x" style="left:73.8px;top:198.2px;font-size:11.00px;letter-spacing:0.12px;color:#b4b4b4">100%</div>
<div class="x" style="left:148.7px;top:198.2px;font-size:11.00px;letter-spacing:-0.25px;color:#b4b4b4">20</div>
<div class="x" style="left:14.4px;top:222.1px;font-size:10.22px">เอฟเฟค</div>
<div class="x" style="left:73.6px;top:221.6px;font-size:11.34px">(ไม่มี)</div>
<div class="x" style="left:16.0px;top:242.5px;font-size:9.50px;letter-spacing:-0.15px;color:#b4b4b4">Width</div>
<div class="x" style="left:97.1px;top:242.0px;font-size:11.00px;color:#b4b4b4">1</div>
<div class="x" style="left:143.2px;top:242.0px;font-size:11.00px;letter-spacing:-0.44px;color:#b4b4b4">100</div>
<div class="x" style="left:3.0px;top:268.1px;font-size:9.99px">โหมด</div>
<div class="x" style="left:66.5px;top:268.2px;font-size:11.00px;letter-spacing:-0.49px">Normal</div>
<div class="x" style="left:3.0px;top:289.5px;font-size:10.16px">โปร่งแสง</div>
<div class="x" style="left:133.5px;top:289.2px;font-size:11.00px;letter-spacing:0.29px">100%</div>
<div class="x" style="left:18.5px;top:308.6px;font-size:11.00px;letter-spacing:-0.10px">Preserve Opacity</div>
<div class="x" style="left:18.5px;top:324.6px;font-size:11.00px;letter-spacing:-0.34px">Clipping Group</div>
<div class="x" style="left:18.5px;top:340.6px;font-size:11.00px;letter-spacing:-0.25px">Selection Source</div>
<div class="x" style="left:179.1px;top:390.5px;font-size:9.50px;letter-spacing:-0.16px">Pen</div>
<div class="x" style="left:220.4px;top:391.0px;font-size:7.99px">แอร์บรัช</div>
<div class="x" style="left:259.8px;top:390.9px;font-size:8.36px">ภู่กัน</div>
<div class="x" style="left:300.6px;top:391.2px;font-size:7.60px">สีน้ำ</div>
<div class="x" style="left:179.6px;top:423.1px;font-size:7.63px">มาร์คเคอร์</div>
<div class="x" style="left:219.7px;top:422.9px;font-size:8.22px">ยางลบ</div>
<div class="x" style="left:259.8px;top:422.7px;font-size:8.74px">คัดเลือก</div>
<div class="x" style="left:300.6px;top:422.8px;font-size:8.25px">ไม่เลือก</div>
<div class="x" style="left:181.9px;top:466.9px;font-size:10.39px">ทั่วไป</div>
<div class="x" style="left:173.8px;top:490.6px;font-size:11.00px;letter-spacing:-0.36px">Size</div>
<div class="x" style="left:256.1px;top:489.9px;font-size:9.00px;letter-spacing:0.17px">x 5.0</div>
<div class="x" style="left:333.1px;top:489.5px;font-size:11.00px;letter-spacing:0.70px">2.0</div>
<div class="x" style="left:173.8px;top:508.4px;font-size:11.00px;letter-spacing:-0.37px">Min Size</div>
<div class="x" style="left:312.1px;top:507.6px;font-size:11.00px;letter-spacing:1.68px">0%</div>
<div class="x" style="left:174.5px;top:531.1px;font-size:10.01px">ความหนา</div>
<div class="x" style="left:337.5px;top:529.4px;font-size:11.00px;letter-spacing:0.05px">35</div>
<div class="x" style="left:181.4px;top:553.8px;font-size:10.49px">หัวแปรงปกติ</div>
<div class="x" style="left:337.5px;top:552.5px;font-size:11.00px;letter-spacing:0.05px;color:#b4b4b4">82</div>
<div class="x" style="left:180.9px;top:574.9px;font-size:11.00px;letter-spacing:0.30px">(no texture)</div>
<div class="x" style="left:337.5px;top:574.6px;font-size:11.00px;letter-spacing:0.05px;color:#b4b4b4">95</div>
<div class="x" style="left:191.9px;top:598.7px;font-size:10.26px">ขั้นสูง</div>
<div class="x" style="left:476.6px;top:53.1px;font-size:10.84px">ส่วนที่เลือก</div>
<div class="x" style="left:544.1px;top:51.8px;font-size:11.00px;letter-spacing:0.12px">100%</div>
<div class="x" style="left:685.0px;top:51.8px;font-size:11.00px;letter-spacing:0.24px">+000?</div>
<div class="x" style="left:825.0px;top:52.0px;font-size:10.84px">ปกติ</div>
<div class="x" style="left:886.4px;top:52.4px;font-size:11.00px;letter-spacing:-0.36px">Stabilize</div>
<div class="x" style="left:933.8px;top:51.8px;font-size:11.00px">3</div>
<div class="x" style="left:380.5px;top:729.4px;font-size:11.00px;letter-spacing:-0.13px">dai.sai</div>
<div class="x" style="left:485.8px;top:728.5px;font-size:9.00px;letter-spacing:0.56px">100%</div>
<div class="x" style="left:901.1px;top:751.7px;font-size:11.00px;letter-spacing:-0.10px">Memory load: 62% (65MB used / 511MB reserved)</div>
<div class="x" style="left:187.2px;top:636.5px;font-size:9.00px;letter-spacing:0.04px">0.7</div>
<div class="x" style="left:219.2px;top:636.5px;font-size:9.00px;letter-spacing:0.04px">0.8</div>
<div class="x" style="left:255.0px;top:636.5px;font-size:9.00px">1</div>
<div class="x" style="left:283.2px;top:636.5px;font-size:9.00px;letter-spacing:0.04px">1.5</div>
<div class="x" style="left:319.0px;top:636.5px;font-size:9.00px">2</div>
<div class="x" style="left:187.2px;top:668.5px;font-size:9.00px;letter-spacing:0.04px">2.3</div>
<div class="x" style="left:219.2px;top:668.5px;font-size:9.00px;letter-spacing:0.04px">2.6</div>
<div class="x" style="left:255.0px;top:668.5px;font-size:9.00px">3</div>
<div class="x" style="left:283.2px;top:668.5px;font-size:9.00px;letter-spacing:0.04px">3.5</div>
<div class="x" style="left:319.0px;top:668.5px;font-size:9.00px">4</div>
<div class="x" style="left:191.0px;top:700.4px;font-size:9.00px">5</div>
<div class="x" style="left:223.0px;top:700.4px;font-size:9.00px">6</div>
<div class="x" style="left:255.0px;top:700.4px;font-size:9.00px">7</div>
<div class="x" style="left:287.0px;top:700.4px;font-size:9.00px">8</div>
<div class="x" style="left:319.0px;top:700.4px;font-size:9.00px">9</div>
<div class="x" style="left:188.5px;top:732.2px;font-size:9.00px;letter-spacing:-0.02px">10</div>
<div class="x" style="left:220.5px;top:732.2px;font-size:9.00px;letter-spacing:-0.02px">12</div>
<div class="x" style="left:252.5px;top:732.2px;font-size:9.00px;letter-spacing:-0.02px">14</div>
<div class="x" style="left:284.5px;top:732.2px;font-size:9.00px;letter-spacing:-0.02px">16</div>
<div class="x" style="left:316.5px;top:732.2px;font-size:9.00px;letter-spacing:-0.02px">20</div>


</div>
</body>
</html>
